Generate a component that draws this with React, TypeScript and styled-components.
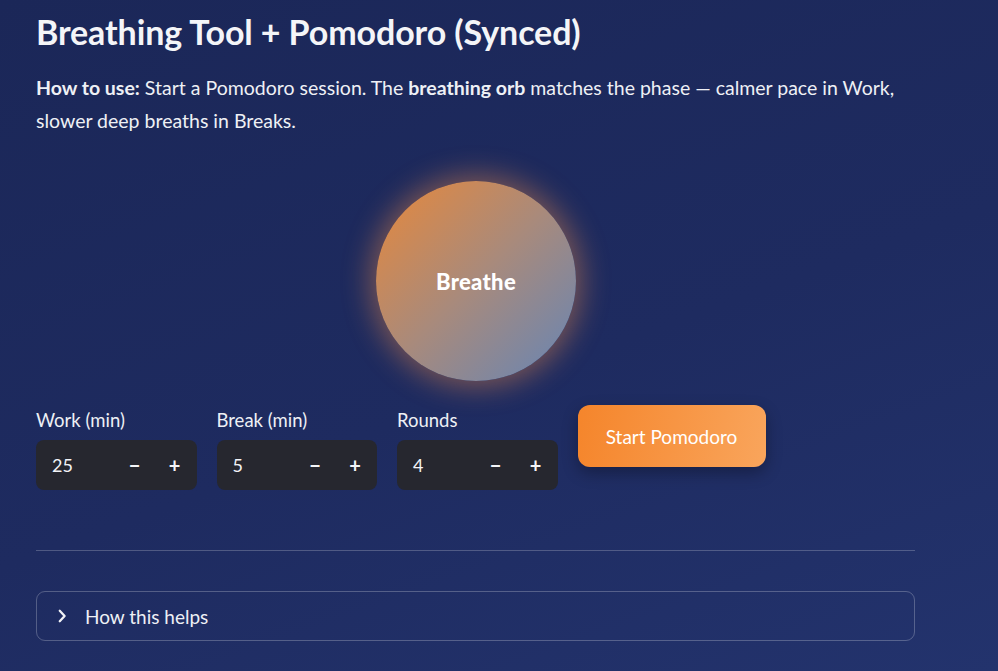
import styled, { createGlobalStyle } from "styled-components";

const GlobalStyle = createGlobalStyle`
  html, body {
    margin: 0;
    padding: 0;
    height: 100%;
  }
  body {
    font-family: Lato, "Open Sans", sans-serif;
    color: #f2f3f7;
    background: linear-gradient(160deg, #1b2758 0%, #1e2b60 55%, #23336d 100%);
    min-height: 671px;
    overflow: hidden;
  }
`;

type Field = { label: string; value: number };

const fields: Field[] = [
  { label: "Work (min)", value: 25 },
  { label: "Break (min)", value: 5 },
  { label: "Rounds", value: 4 },
];

export default function App() {
  return (
    <>
      <GlobalStyle />
      <Page>
        <Title>Breathing Tool + Pomodoro (Synced)</Title>
        <Intro>
          <b>How to use:</b> Start a Pomodoro session. The <b>breathing orb</b> matches the phase — calmer
          pace in Work, slower deep breaths in Breaks.
        </Intro>

        <OrbRow>
          <Orb>Breathe</Orb>
        </OrbRow>

        <Controls>
          {fields.map((f) => (
            <FieldBox key={f.label}>
              <Label>{f.label}</Label>
              <Stepper>
                <Value>{f.value}</Value>
                <StepButton>−</StepButton>
                <StepButton>+</StepButton>
              </Stepper>
            </FieldBox>
          ))}
          <StartButton>Start Pomodoro</StartButton>
        </Controls>

        <Divider />

        <Expander>
          <svg width="18" height="18" viewBox="0 0 24 24" fill="none" stroke="#f2f3f7" strokeWidth="3" strokeLinecap="round" strokeLinejoin="round">
            <path d="M9 5l6.5 7L9 19" />
          </svg>
          <span>How this helps</span>
        </Expander>
      </Page>
    </>
  );
}

const Page = styled.div`
  width: 880px;
  padding: 12px 0 0 36px;
  display: flex;
  flex-direction: column;
`;

const Title = styled.h1`
  margin: 0;
  font-size: 34px;
  font-weight: 700;
  line-height: 40px;
  letter-spacing: -0.1px;
  color: #f4f5f8;
`;

const Intro = styled.p`
  margin: 19px 0 0;
  font-size: 19.5px;
  line-height: 33px;
  color: #eef0f5;
  b {
    font-weight: 700;
  }
`;

const OrbRow = styled.div`
  display: flex;
  justify-content: center;
  margin-top: 44px;
`;

const Orb = styled.div`
  width: 200px;
  height: 200px;
  border-radius: 50%;
  background: linear-gradient(135deg, #e8883a 0%, #a88a7c 50%, #6585b6 100%);
  box-shadow: 0 0 28px 6px rgba(240, 140, 70, 0.45);
  display: flex;
  align-items: center;
  justify-content: center;
  font-size: 22px;
  font-weight: 900;
  color: #fff;
  letter-spacing: 0.3px;
`;

const Controls = styled.div`
  display: flex;
  gap: 20px;
  margin-top: 24px;
  align-items: flex-start;
`;

const FieldBox = styled.div`
  display: flex;
  flex-direction: column;
  width: 160.5px;
`;

const Label = styled.div`
  font-size: 18.5px;
  line-height: 22px;
  margin-top: 4px;
  margin-bottom: 9px;
  color: #eef0f5;
`;

const Stepper = styled.div`
  height: 50px;
  border-radius: 8px;
  background: #26272f;
  display: flex;
  align-items: center;
  padding: 0 2px 0 16px;
`;

const Value = styled.span`
  flex: 1;
  font-size: 18px;
  color: #f2f3f7;
`;

const StepButton = styled.span`
  width: 40px;
  text-align: center;
  font-size: 20px;
  font-weight: 700;
  color: #f4f5f8;
`;

const StartButton = styled.button`
  width: 188px;
  height: 62px;
  border: none;
  border-radius: 12px;
  background: linear-gradient(100deg, #f5852b 0%, #f9a55c 100%);
  box-shadow: 0 6px 16px rgba(0, 0, 0, 0.3);
  color: #fff;
  font-family: Lato, "Open Sans", sans-serif;
  font-size: 19px;
  cursor: pointer;
`;

const Divider = styled.hr`
  margin: 60px 0 0;
  border: none;
  height: 1px;
  background: rgba(255, 255, 255, 0.22);
  width: 879px;
`;

const Expander = styled.div`
  margin-top: 40px;
  width: 879px;
  height: 50px;
  border: 1px solid rgba(255, 255, 255, 0.24);
  border-radius: 9px;
  display: flex;
  align-items: center;
  gap: 14px;
  padding-left: 16px;
  box-sizing: border-box;
  font-size: 19px;
  color: #eef0f5;
`;
